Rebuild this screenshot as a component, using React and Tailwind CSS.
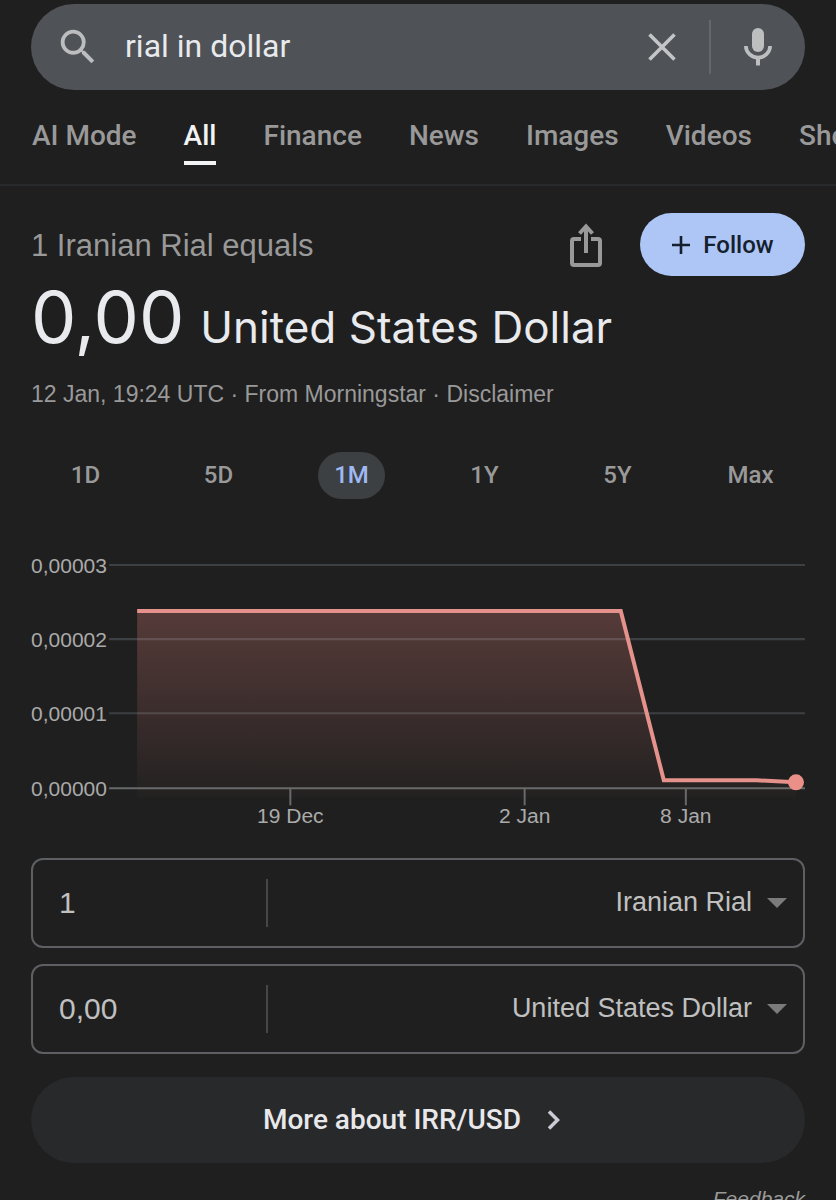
import { useState } from "react";

const tabs = ["AI Mode", "All", "Finance", "News", "Images", "Videos", "Shopping"];
const ranges = ["1D", "5D", "1M", "1Y", "5Y", "Max"];
const currencies = ["Iranian Rial", "United States Dollar"];

const yTicks = [
  { label: "0,00003", y: 25 },
  { label: "0,00002", y: 99 },
  { label: "0,00001", y: 173 },
  { label: "0,00000", y: 248 },
];
const xTicks = [
  { label: "19 Dec", x: 259 },
  { label: "2 Jan", x: 493 },
  { label: "8 Jan", x: 654 },
];

function SearchBar() {
  const [query, setQuery] = useState("rial in dollar");
  return (
    <form role="search" onSubmit={(e) => e.preventDefault()} className="flex h-[86px] items-center rounded-full bg-[#4f5256] px-6">
      <button type="submit" aria-label="Search" className="shrink-0">
        <svg viewBox="0 0 24 24" className="size-[46px]" fill="#bcbdbe">
          <path d="M15.5 14h-.79l-.28-.27A6.471 6.471 0 0 0 16 9.5 6.5 6.5 0 1 0 9.5 16c1.61 0 3.09-.59 4.23-1.57l.27.28v.79l5 4.99L20.49 19l-4.99-5zm-6 0C7.01 14 5 11.99 5 9.5S7.01 5 9.5 5 14 7.01 14 9.5 11.99 14 9.5 14z" />
        </svg>
      </button>
      <input
        aria-label="Search query"
        value={query}
        onChange={(e) => setQuery(e.target.value)}
        className="ml-6 h-12 min-w-0 flex-1 bg-transparent pb-0.5 font-[Roboto,sans-serif] text-[32px] text-[#e8eaed] outline-none"
      />
      <button type="button" aria-label="Clear" onClick={() => setQuery("")} className="shrink-0">
        <svg viewBox="0 0 46 46" className="size-[46px]" stroke="#c4c5c6" strokeWidth="3.6" fill="none">
          <path d="M10.5 10.5 35.5 35.5M35.5 10.5 10.5 35.5" />
        </svg>
      </button>
      <span className="ml-6 h-[54px] w-[2px] shrink-0 bg-[#64676b]" />
      <button type="button" aria-label="Search by voice" className="ml-6 shrink-0">
        <svg viewBox="0 0 46 46" className="size-[46px]" fill="none">
          <rect x="17" y="4" width="12" height="24" rx="6" fill="#bdbec0" />
          <path d="M10.9 22a12.1 11.6 0 0 0 24.2 0" stroke="#bdbec0" strokeWidth="3.7" />
          <path d="M23 34v7.500" stroke="#bdbec0" strokeWidth="4" />
        </svg>
      </button>
    </form>
  );
}

function Chart() {
  return (
    <svg viewBox="0 0 773 296" className="block w-full font-['Liberation_Sans',Arial,sans-serif] text-[21px]" role="img" aria-label="Iranian Rial to United States Dollar, last month">
      <defs>
        <linearGradient id="area" x1="0" y1="71" x2="0" y2="257" gradientUnits="userSpaceOnUse">
          <stop offset="0" stopColor="#f28b82" stopOpacity="0.26" />
          <stop offset="1" stopColor="#f28b82" stopOpacity="0.02" />
        </linearGradient>
      </defs>
      {yTicks.map((t, i) => (
        <g key={t.label}>
          <path d={`M78 ${t.y}H773`} stroke={i === 3 ? "#66686a" : "#3c4043"} strokeWidth="2" />
          <text x="0" y={t.y + 8} fill="#aaaaaa">{t.label}</text>
        </g>
      ))}
      {xTicks.map((t) => (
        <g key={t.label}>
          <path d={`M${t.x} 248v17`} stroke="#66686a" strokeWidth="2" />
          <text x={t.x} y="283" textAnchor="middle" fill="#aaaaaa">{t.label}</text>
        </g>
      ))}
      <path d="M106 71H589L632 240H725L764 242V257H106Z" fill="url(#area)" />
      <path d="M106 71H589L632 240H725L764 242" fill="none" stroke="#e4928b" strokeWidth="4" />
      <circle cx="764" cy="242" r="8" fill="#eb9088" />
    </svg>
  );
}

function AmountRow({ label, value, currency }) {
  const [amount, setAmount] = useState(value);
  const [unit, setUnit] = useState(currency);
  return (
    <div className="flex h-[90px] items-center rounded-xl border-2 border-[#5d5f62] text-[#c0c0c0]">
      <input
        aria-label={`${label} amount`}
        value={amount}
        inputMode="decimal"
        onChange={(e) => setAmount(e.target.value)}
        className="h-12 w-[233px] min-w-0 bg-transparent pl-[26px] text-[30px] outline-none"
      />
      <span className="h-12 w-[2px] shrink-0 bg-[#454749]" />
      <div className="relative h-full min-w-0 flex-1">
        <select
          aria-label={`${label} currency`}
          value={unit}
          onChange={(e) => setUnit(e.target.value)}
          className="h-full w-full appearance-none bg-transparent pr-[51px] pb-0.5 [text-align-last:right] text-[27px] outline-none"
        >
          {currencies.map((c) => <option key={c}>{c}</option>)}
        </select>
        <svg viewBox="0 0 20 10" className="pointer-events-none absolute inset-y-0 right-4 my-auto h-[10px] w-5" fill="#7b7b7b">
          <path d="M0 0H20L10 10Z" />
        </svg>
      </div>
    </div>
  );
}

export default function App() {
  const [range, setRange] = useState("1M");
  return (
    <div className="min-h-screen overflow-x-hidden bg-[#1f1f1f] pt-1 font-['Liberation_Sans',Arial,sans-serif] text-[#999999]">
      <header>
        <div className="px-[31px]"><SearchBar /></div>
        <nav className="flex h-24 gap-[47px] overflow-hidden border-b-2 border-[#28292b] pt-6 pl-8 font-[Roboto,sans-serif] text-[28px] font-medium whitespace-nowrap">
          {tabs.map((t) => (
            <a key={t} href="#" className={t === "All" ? "h-[51px] shrink-0 border-b-4 border-[#f1f3f4] leading-[44px] text-[#f1f3f4]" : "h-[51px] shrink-0 leading-[44px]"}>{t}</a>
          ))}
        </nav>
      </header>

      <main className="px-[31px] pt-[27px]">
        <div className="flex items-center">
          <h2 className="flex-1 pt-1 text-[31px]">1 Iranian Rial equals</h2>
          <button type="button" aria-label="Share">
            <svg viewBox="0 0 36 46" className="h-[46px] w-9" fill="none" stroke="#999999" strokeWidth="4">
              <path d="M13 17H6Q4 17 4 19V41Q4 43 6 43H30Q32 43 32 41V19Q32 17 30 17H23" />
              <path d="M18 31V4M11.500 11.500 18 4.500 24.500 11.500" />
            </svg>
          </button>
          <button type="button" className="ml-9 flex h-[63px] w-[165px] items-center justify-center gap-3 rounded-full bg-[#aec6f6] font-[Roboto,sans-serif] text-2xl font-medium text-[#14202e]">
            <svg viewBox="0 0 20 20" className="size-5" stroke="#14202e" strokeWidth="2.6"><path d="M10 1V19M1 10H19" /></svg>
            Follow
          </button>
        </div>

        <p className="mt-[5px] flex items-baseline gap-4 font-[Inter,sans-serif] text-[#e8eaed]">
          <span className="text-[72px] leading-[72px]">0,00</span>
          <span className="text-[44px] leading-[56px]">United States Dollar</span>
        </p>
        <p className="mt-[23px] text-[23px] leading-8">12 Jan, 19:24 UTC · From Morningstar · <a href="#">Disclaimer</a></p>

        <div className="-mx-3 mt-[42px] grid grid-cols-6 justify-items-center font-[Roboto,sans-serif] text-2xl font-medium">
          {ranges.map((r) => (
            <button
              key={r}
              type="button"
              aria-pressed={r === range}
              onClick={() => setRange(r)}
              className={r === range ? "h-[47px] rounded-full bg-[#3c4043] px-4 pb-0.5 text-[#9fb9f5]" : "h-[47px] px-4 pb-0.5"}
            >
              {r}
            </button>
          ))}
        </div>

        <div className="mt-[41px]"><Chart /></div>

        <div className="mt-[22px] flex flex-col gap-4">
          <AmountRow label="From" value="1" currency="Iranian Rial" />
          <AmountRow label="To" value="0,00" currency="United States Dollar" />
        </div>

        <a href="#" className="mt-[23px] flex h-[86px] items-center justify-center gap-[26px] rounded-full bg-[#28292a] pr-3 font-[Roboto,sans-serif] text-[28px] font-medium text-[#e8e8ea]">
          More about IRR/USD
          <svg viewBox="0 0 14 20" className="h-5 w-[14px]" fill="none" stroke="#ccccd6" strokeWidth="3.500"><path d="M2 1.500 10.500 10 2 18.500" /></svg>
        </a>
        <div className="mt-5 text-right text-[21px] italic"><a href="#">Feedback</a></div>
      </main>
    </div>
  );
}
